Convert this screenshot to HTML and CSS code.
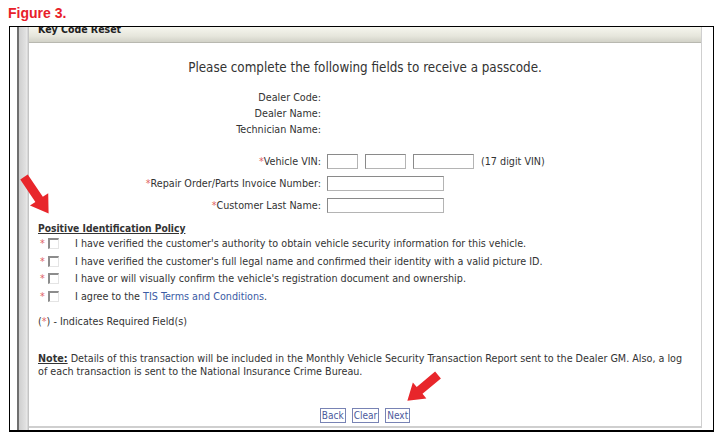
FILE: index.html
```html
<!DOCTYPE html>
<html lang="en">
<head>
  <meta charset="UTF-8" />
  <title>Key Code Reset</title>
  <link rel="stylesheet" href="styles.css">
</head>
<body>

  <div class="fig-label">Figure 3.</div>

  <div class="frame">
    <div class="gutter"></div>

    <div class="panel">
      <div class="panel-head"><span>Key Code Reset</span></div>

      <div class="panel-body">
        <p class="intro">Please complete the following fields to receive a passcode.</p>

        <!-- Dealer info -->
        <div class="info">
          <span class="lbl">Dealer Code:</span><span></span>
          <span class="lbl">Dealer Name:</span><span></span>
          <span class="lbl">Technician Name:</span><span></span>
        </div>

        <!-- Required fields -->
        <div class="fields">
          <label class="lbl"><em>*</em>Vehicle VIN:</label>
          <div class="vin">
            <input class="box vin1" type="text">
            <input class="box vin2" type="text">
            <input class="box vin3" type="text">
            <span class="hint">(17 digit VIN)</span>
          </div>

          <label class="lbl"><em>*</em>Repair Order/Parts Invoice Number:</label>
          <div><input class="box wide" type="text"></div>

          <label class="lbl"><em>*</em>Customer Last Name:</label>
          <div><input class="box wide" type="text"></div>
        </div>

        <!-- Policy -->
        <div class="policy">
          <h3>Positive Identification Policy</h3>
          <ul>
            <li><em>*</em><input type="checkbox"><span>I have verified the customer's authority to obtain vehicle security information for this vehicle.</span></li>
            <li><em>*</em><input type="checkbox"><span>I have verified the customer's full legal name and confirmed their identity with a valid picture ID.</span></li>
            <li><em>*</em><input type="checkbox"><span>I have or will visually confirm the vehicle's registration document and ownership.</span></li>
            <li><em>*</em><input type="checkbox"><span>I agree to the <a href="#">TIS Terms and Conditions</a>.</span></li>
          </ul>
        </div>

        <p class="req">(<em>*</em>) - Indicates Required Field(s)</p>

        <p class="note"><b>Note:</b> Details of this transaction will be included in the Monthly Vehicle Security Transaction Report sent to the Dealer GM. Also, a log of each transaction is sent to the National Insurance Crime Bureau.</p>

        <div class="buttons">
          <button>Back</button>
          <button>Clear</button>
          <button>Next</button>
        </div>
      </div>
    </div>

    <div class="right-gap"></div>
  </div>

  <!-- red callout arrows -->
  <svg class="arrow arrow-policy" width="44" height="46" viewBox="0 0 44 46">
    <polygon points="0,-4.5 27,-4.5 27,-11 44,0 27,11 27,4.5 0,4.5" transform="translate(5 3) rotate(56)" />
  </svg>
  <svg class="arrow arrow-next" width="44" height="40" viewBox="0 0 44 40">
    <polygon points="0,-4.5 24,-4.5 24,-10.5 40,0 24,10.5 24,4.5 0,4.5" transform="translate(40 4) rotate(140)" />
  </svg>

</body>
</html>
```

FILE: styles.css
```css
:root {
  --text: #333333;
  --star: #e06464;
  --link: #3b5ba5;
  --red: #e8262b;
}

* {
  margin: 0;
  padding: 0;
  box-sizing: border-box;
}

body {
  width: 723px;
  height: 441px;
  background: #ffffff;
  color: var(--text);
  font-family: "DejaVu Sans Condensed", "DejaVu Sans", sans-serif;
  font-size: 10.7px;
  position: relative;
}

.fig-label {
  font-family: "Liberation Sans", Arial, sans-serif;
  font-weight: bold;
  font-size: 14px;
  color: #e8202a;
  height: 26px;
  padding: 5px 0 0 8px;
}

.frame {
  margin-left: 9px;
  width: 705px;
  height: 406px;
  border: 1px solid #000;
  border-bottom-width: 2px;
  display: flex;
  overflow: hidden;
}

.gutter {
  width: 19px;
  flex-shrink: 0;
  background: linear-gradient(to right,
    #ffffff 0, #ffffff 7px,
    #6f6f6f 7px, #6f6f6f 9px,
    #cfcfcf 9px, #e2e2e2 16px,
    #ececec 17px, #c4c4c4 18px, #c4c4c4 19px);
}

.panel {
  flex: 1;
  border-right: 1px solid #cfcfcf;
  border-bottom: 2px solid #cfcfcf;
  margin-bottom: 2px;
  display: flex;
  flex-direction: column;
  overflow: hidden;
}

.right-gap {
  width: 11px;
  flex-shrink: 0;
}

.panel-head {
  height: 16px;
  flex-shrink: 0;
  overflow: hidden;
  background: linear-gradient(#f6f6ee, #e6e6dc 60%, #d2d2c8);
  border-bottom: 1px solid #b8b8b0;
  padding-left: 9px;
}

.panel-head span {
  display: block;
  margin-top: -5px;
  font-weight: bold;
  font-size: 10.5px;
  line-height: 14px;
  color: #222;
}

.panel-body {
  flex: 1;
  padding: 0 12px 0 9px;
}

.intro {
  text-align: center;
  font-size: 13.3px;
  margin-top: 17px;
  margin-right: -3px;
  line-height: 16px;
}

.info,
.fields {
  display: grid;
  grid-template-columns: 283px 1fr;
  column-gap: 6px;
}

.info {
  margin-top: 14px;
  row-gap: 0;
  line-height: 16px;
}

.fields {
  margin-top: 16px;
  row-gap: 7px;
  align-items: center;
}

.lbl {
  text-align: right;
  white-space: nowrap;
}

em {
  font-style: normal;
  color: var(--star);
}

.box {
  height: 15px;
  border: 1px solid #8a8a8a;
  border-right-color: #b4b4b4;
  border-bottom-color: #b4b4b4;
  background: #fff;
  vertical-align: middle;
}

.vin {
  display: flex;
  align-items: center;
  gap: 7px;
}

.vin1 { width: 31px; }
.vin2 { width: 41px; }
.vin3 { width: 61px; }

.wide {
  width: 117px;
}

.policy {
  margin-top: 9px;
}

.policy h3 {
  font-size: 10.2px;
  font-weight: bold;
  text-decoration: underline;
  line-height: 13px;
}

.policy ul {
  list-style: none;
}

.policy li {
  display: flex;
  align-items: center;
  height: 17.6px;
}

.policy li em {
  width: 10px;
  padding-left: 2px;
}

.policy li input {
  appearance: none;
  width: 11px;
  height: 11px;
  border: 1px solid #e4e4e4;
  border-top: 2px solid #8c8c8c;
  border-left: 2px solid #8c8c8c;
  margin-right: 16px;
}

a {
  color: var(--link);
  text-decoration: none;
}

.req {
  margin-top: 10px;
}

.note {
  margin-top: 24px;
  line-height: 13px;
}

.note b {
  text-decoration: underline;
}

.buttons {
  margin-top: 30px;
  margin-right: -3px;
  display: flex;
  justify-content: center;
  gap: 6px;
}

.buttons button {
  font-family: inherit;
  font-size: 10px;
  color: #4c5a9c;
  background: #fff;
  border: 1px solid #7883b4;
  padding: 1px 1px;
  height: 15px;
  line-height: 11px;
}

.arrow {
  position: absolute;
  fill: var(--red);
}

.arrow-policy {
  left: 19px;
  top: 174px;
}

.arrow-next {
  left: 398px;
  top: 371px;
}
```
